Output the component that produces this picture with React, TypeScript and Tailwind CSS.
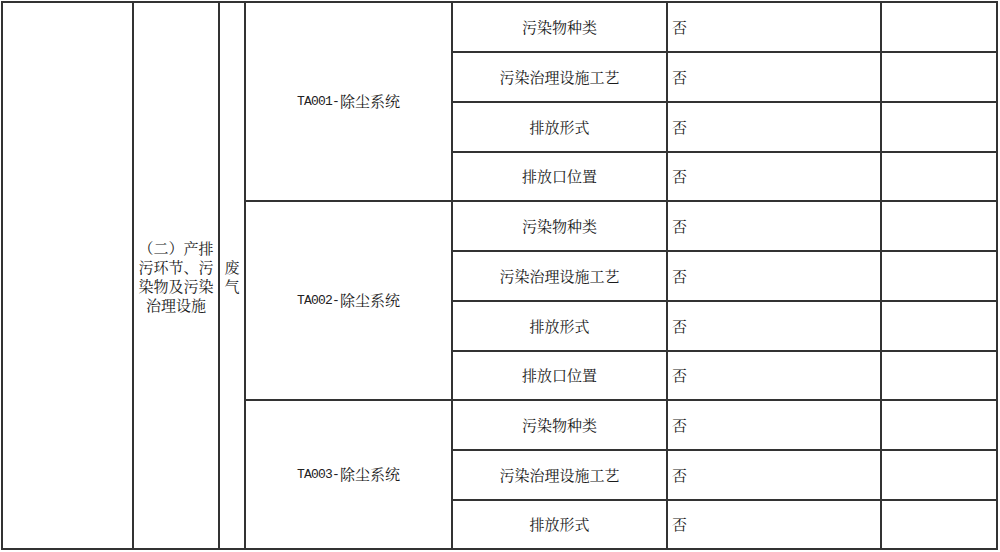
import React from "react";

const font = {
  fontFamily:
    '"Noto Serif CJK SC", "AR PL UMing CN", "Noto Sans CJK SC", serif',
};

const groups: { name: string; items: string[] }[] = [
  { name: "TA001", items: ["污染物种类", "污染治理设施工艺", "排放形式", "排放口位置"] },
  { name: "TA002", items: ["污染物种类", "污染治理设施工艺", "排放形式", "排放口位置"] },
  { name: "TA003", items: ["污染物种类", "污染治理设施工艺", "排放形式"] },
];

const cell = "border-r-2 border-b-2 border-[#333333]";

export default function App() {
  return (
    <div className="w-[1000px] h-[552px] bg-white overflow-hidden text-[#1a1a1a]" style={font}>
      <div className="ml-[1px] mt-[1px] w-[997px] border-l-2 border-t-2 border-[#333333] grid grid-cols-[131px_86px_26px_207px_215px_214px_116px] grid-rows-[50px_50px_50px_49px_50px_50px_50px_49px_50px_50px_49px] text-[15px]">
        <div className={`${cell} row-span-11`} />
        <div className={`${cell} row-span-11 flex flex-col items-center justify-center leading-[19px]`}>
          <span>（二）产排</span>
          <span>污环节、污</span>
          <span>染物及污染</span>
          <span>治理设施</span>
        </div>
        <div className={`${cell} row-span-11 flex flex-col items-center justify-center leading-[19px]`}>
          <span>废</span>
          <span>气</span>
        </div>
        {groups.map((g) => (
          <React.Fragment key={g.name}>
            <div
              className={`${cell} ${g.items.length === 4 ? "row-span-4" : "row-span-3"} flex items-center justify-center`}
            >
              <span
                className="text-[13px] tracking-[-0.8px] mr-[1px] text-[#222222]"
                style={{ fontFamily: '"Liberation Mono", monospace' }}
              >
                {g.name}-
              </span>
              <span>除尘系统</span>
            </div>
            {g.items.map((it, i) => (
              <React.Fragment key={i}>
                <div className={`${cell} flex items-center justify-center`}>{it}</div>
                <div className={`${cell} flex items-center pl-[4px]`}>否</div>
                <div className={cell} />
              </React.Fragment>
            ))}
          </React.Fragment>
        ))}
      </div>
    </div>
  );
}
